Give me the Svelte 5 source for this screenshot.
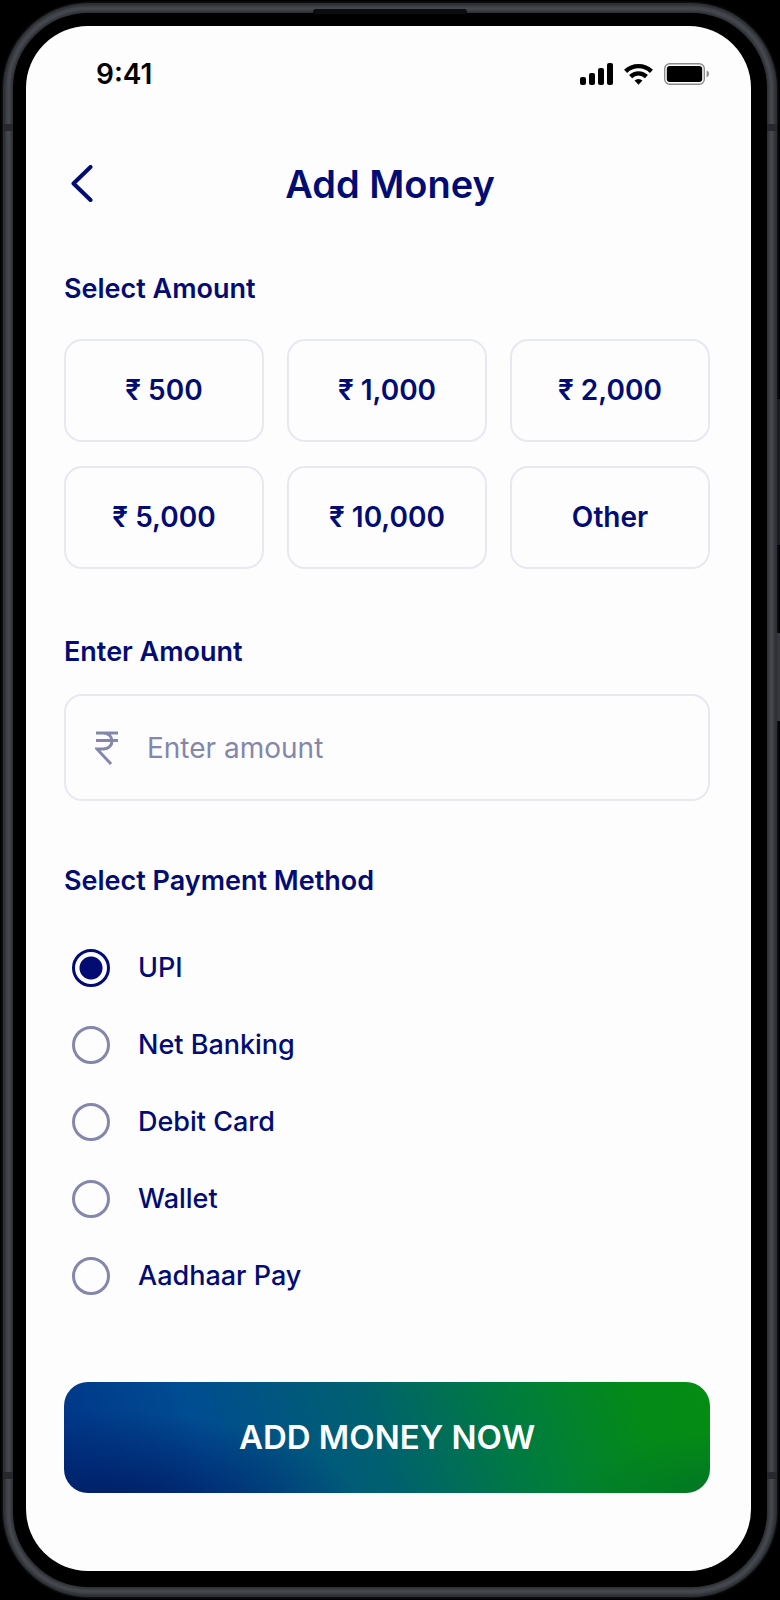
<script lang="ts">
    /*--------------------------------- State --------------------------------*/

    const amounts = ["₹ 500", "₹ 1,000", "₹ 2,000", "₹ 5,000", "₹ 10,000", "Other"];
    const methods = ["UPI", "Net Banking", "Debit Card", "Wallet", "Aadhaar Pay"];

    let amount = $state("");
    let method = $state("UPI");

    /*-------------------------------- Methods -------------------------------*/

    function pick(label: string) {
        amount = label === "Other" ? "" : label.replace(/[^0-9]/g, "");
    }
</script>

<div class="phone">
    <span class="speaker"></span>
    <span class="key key-power"></span>
    <span class="key key-side"></span>
    <span class="band band-top"></span>
    <span class="band band-bottom"></span>

    <div class="screen">
        <div class="status">
            <span>9:41</span>
            <div class="status-icons">
                <svg width="33" height="22" viewBox="0 0 33 22" aria-hidden="true">
                    <rect x="0" y="14" width="6" height="8" rx="2" />
                    <rect x="9" y="10" width="6" height="12" rx="2" />
                    <rect x="18" y="5" width="6" height="17" rx="2" />
                    <rect x="27" y="0" width="6" height="22" rx="2" />
                </svg>
                <svg width="29" height="22" viewBox="0 0 29 22" aria-hidden="true">
                    <g fill="none" stroke="#000" stroke-width="4.4">
                        <path d="M1.6 8.4a18.4 18.4 0 0 1 25.8 0" />
                        <path d="M6.6 13.6a11.3 11.3 0 0 1 15.8 0" />
                    </g>
                    <path d="M14.5 21.8l-4-4.3a5.8 5.8 0 0 1 8 0z" />
                </svg>
                <svg width="46" height="22" viewBox="0 0 46 22" aria-hidden="true">
                    <rect x="0.7" y="0.7" width="39.6" height="20.6" rx="5" fill="none" stroke="#8c8c8c" stroke-width="1.4" />
                    <rect x="2.8" y="3" width="35.4" height="16" rx="3" />
                    <path d="M42.6 7.6c3.2 1 3.2 5.8 0 6.8z" fill="#8c8c8c" />
                </svg>
            </div>
        </div>

        <header>
            <button class="back" aria-label="Back">
                <svg width="22" height="38" viewBox="0 0 22 38" aria-hidden="true">
                    <path d="M19.5 2L2.5 18.5l17 16.5" />
                </svg>
            </button>
            <h1>Add Money</h1>
        </header>

        <main>
            <h2>Select Amount</h2>
            <div class="amounts">
                {#each amounts as label}
                    <button onclick={() => pick(label)}>{label}</button>
                {/each}
            </div>

            <h2><label for="amount">Enter Amount</label></h2>
            <div class="field">
                <svg width="24" height="34" viewBox="0 0 24 34" aria-hidden="true">
                    <path d="M1 2h22M1 9.5h22M2 2h6c12 0 12 16 0 16H2l14 15" />
                </svg>
                <input id="amount" type="text" inputmode="numeric" placeholder="Enter amount" bind:value={amount} />
            </div>

            <h2 id="method-title">Select Payment Method</h2>
            <div class="methods" role="radiogroup" aria-labelledby="method-title">
                {#each methods as name}
                    <label>
                        <input type="radio" name="method" value={name} bind:group={method} />
                        {name}
                    </label>
                {/each}
            </div>

            <button class="submit">ADD MONEY NOW</button>
        </main>
    </div>
</div>

<style>
    :global(body) {
        background: #000;
    }

    .phone {
        --navy: #020c72;
        --muted: #8487ab;
        --line: #e8e8f0;

        position: relative;
        box-sizing: border-box;
        display: flex;
        min-height: calc(100vh - 6px);
        margin: 3px;
        padding: 13px 16px 16px 13px;
        border: 10px solid #2d2f34;
        border-radius: 86px;
        background: #000;
        box-shadow: 0 0 2px 1px #15171a;
        color: var(--navy);
        font-family: Inter, "Liberation Sans", sans-serif;
    }

    /* Soft highlight running along the metal edge */
    .phone::before {
        content: "";
        position: absolute;
        inset: -7px;
        border: 5px solid #45484e;
        border-radius: 82px;
        filter: blur(1px);
        pointer-events: none;
    }

    .screen {
        flex: 1;
        box-sizing: border-box;
        padding: 32px 41px 76px 38px;
        border-radius: 62px;
        background: #fdfdfe;
    }

    /* Hardware details on the metal edge */

    .speaker {
        position: absolute;
        top: -4px;
        left: 50%;
        z-index: 1;
        width: 154px;
        height: 5px;
        margin-left: -77px;
        border-radius: 3px;
        background: #0c0d0f;
    }

    .key {
        position: absolute;
        right: -13px;
        width: 3px;
        background: #1a1c1f;
    }

    .key-power {
        top: 386px;
        height: 146px;
    }

    .key-side {
        top: 620px;
        height: 88px;
        background: #35373c;
    }

    .band {
        position: absolute;
        right: -10px;
        left: -10px;
        z-index: 1;
        height: 7px;
        border: solid #26282c;
        border-width: 0 10px;
    }

    .band-top {
        top: 111px;
    }

    .band-bottom {
        bottom: 108px;
    }

    .status {
        display: flex;
        align-items: center;
        justify-content: space-between;
        padding-left: 32px;
        color: #000;
        font-size: 28px;
        font-weight: 600;
        line-height: 32px;
    }

    .status-icons {
        display: flex;
        align-items: center;
        gap: 11px;
    }

    header {
        display: grid;
        grid-template-columns: 40px 1fr 34px;
        align-items: center;
        margin-top: 70px;
    }

    button {
        padding: 0;
        border: none;
        background: none;
        color: inherit;
        font-family: inherit;
        cursor: pointer;
    }

    .back {
        display: flex;
        padding-left: 7px;
    }

    .back path {
        fill: none;
        stroke: var(--navy);
        stroke-width: 4;
        stroke-linecap: round;
        stroke-linejoin: round;
    }

    h1 {
        margin: 0;
        font-size: 38px;
        font-weight: 600;
        line-height: 48px;
        text-align: center;
    }

    h2 {
        margin: 0;
        font-size: 27px;
        font-weight: 600;
        line-height: 36px;
    }

    main {
        margin-top: 63px;
    }

    .amounts {
        display: grid;
        grid-template-columns: repeat(3, 1fr);
        gap: 24px 23px;
        margin: 32px 0 65px;
    }

    .amounts button {
        height: 103px;
        padding-bottom: 2px;
        border: 2px solid var(--line);
        border-radius: 18px;
        font-size: 28px;
        font-weight: 600;
    }

    .field {
        display: flex;
        align-items: center;
        gap: 28px;
        box-sizing: border-box;
        height: 107px;
        margin: 24px 0 62px;
        padding: 0 29px;
        border: 2px solid var(--line);
        border-radius: 18px;
    }

    .field path {
        fill: none;
        stroke: var(--muted);
        stroke-width: 3;
    }

    .field input {
        flex: 1;
        min-width: 0;
        padding: 0;
        border: none;
        outline: none;
        background: none;
        color: var(--navy);
        font-family: inherit;
        font-size: 28px;
    }

    .field input::placeholder {
        color: var(--muted);
        opacity: 1;
    }

    .methods {
        display: grid;
        gap: 39px;
        margin: 50px 0 87px;
        padding-left: 8px;
    }

    .methods label {
        display: flex;
        align-items: center;
        gap: 28px;
        font-size: 27px;
        font-weight: 500;
        line-height: 38px;
    }

    .methods input {
        appearance: none;
        box-sizing: border-box;
        width: 38px;
        height: 38px;
        margin: 0;
        border: 3px solid var(--muted);
        border-radius: 50%;
    }

    .methods input:checked {
        border-color: var(--navy);
        background: radial-gradient(circle, var(--navy) 11px, transparent 12px);
    }

    .submit {
        display: block;
        width: 100%;
        height: 111px;
        padding-bottom: 2px;
        border-radius: 24px;
        background:
            radial-gradient(ellipse 40% 90% at 6% 116%, #002068 14%, transparent),
            radial-gradient(ellipse 24% 60% at 102% 105%, #007428, transparent),
            linear-gradient(72deg, #003488 0%, #004c92 22%, #006070 48%, #007a42 68%, #048a18 88%, #048c14 100%);
        color: #fff;
        font-size: 33px;
        font-weight: 600;
    }
</style>
